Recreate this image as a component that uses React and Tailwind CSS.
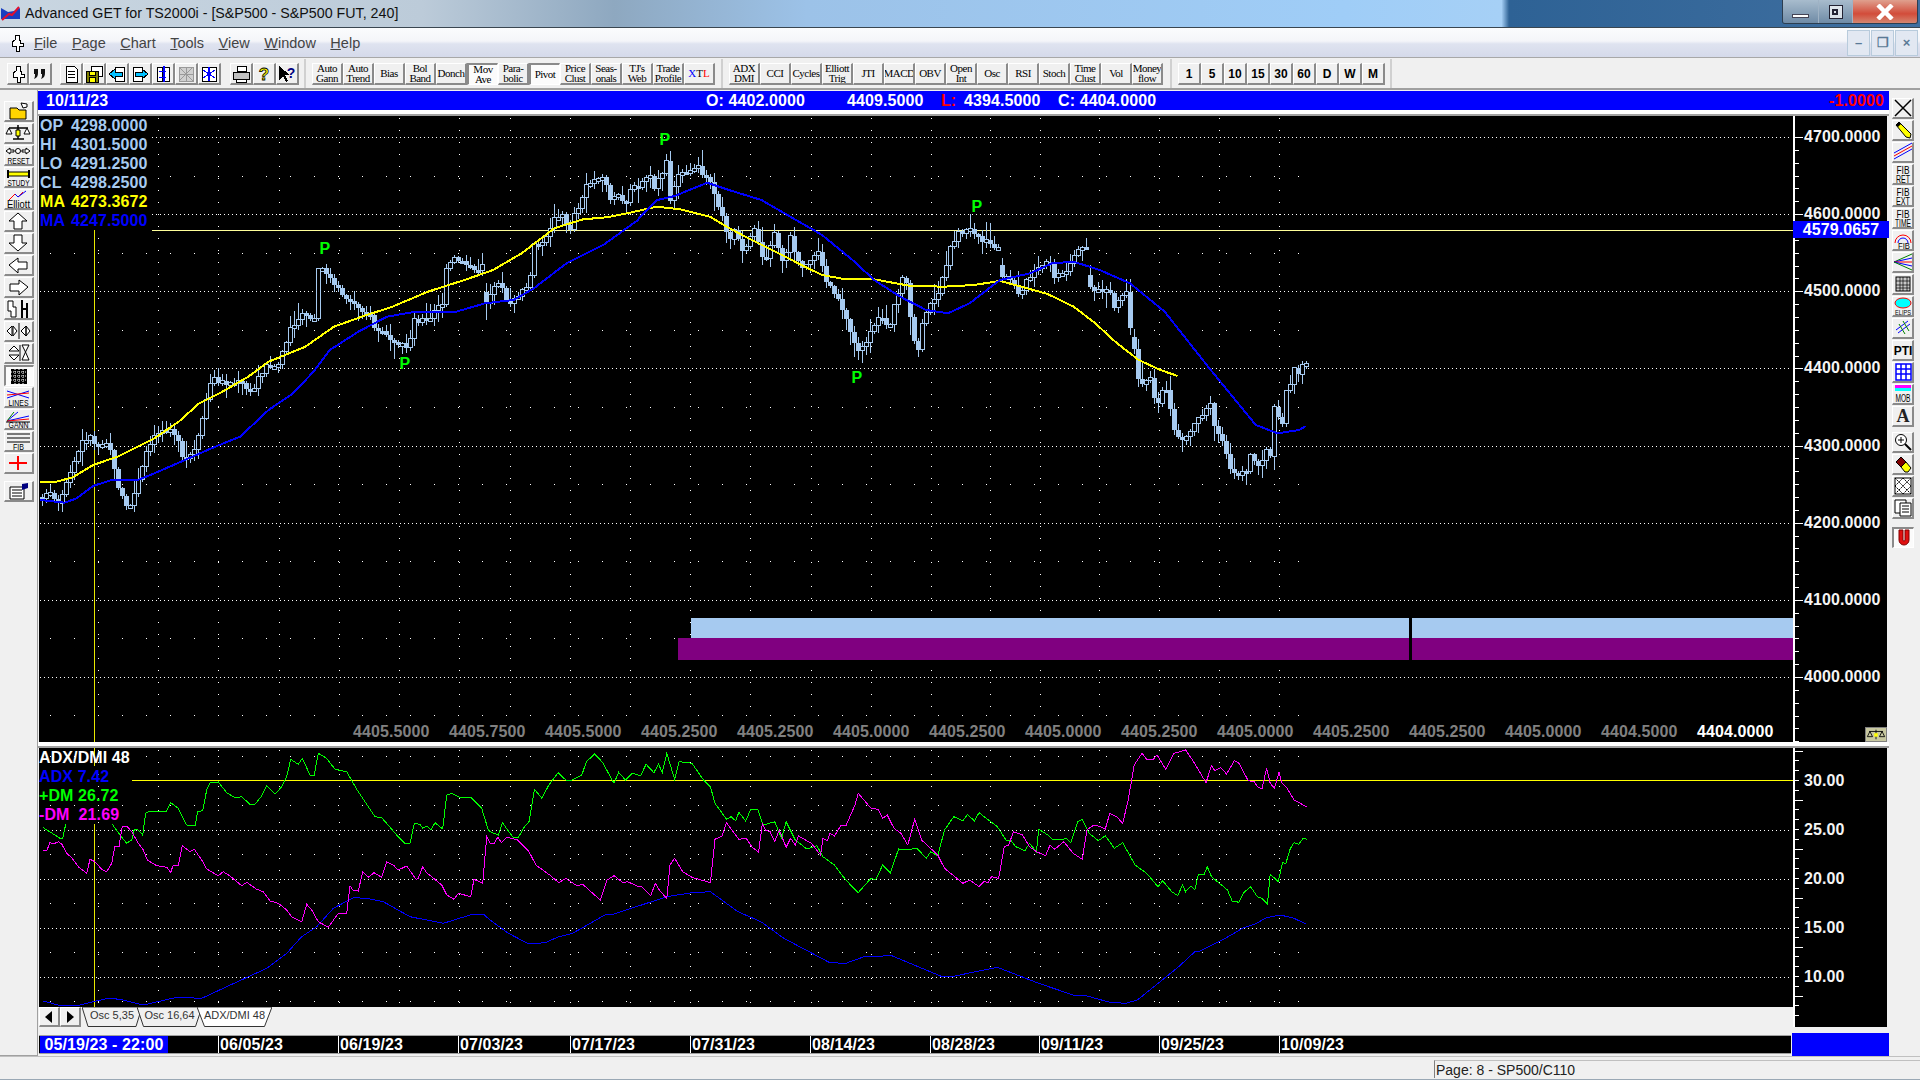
import React from "react";

// zoom-crop coordinates to page coordinates
const z = (ox, oy, sx) => (pts) => pts.map(([x, y]) => [ox + x / sx, oy + y / 3]);
const z6 = z(0, 720, 3);
const z7 = z(40, 220, 2.45);
const z8 = z(640, 120, 2.306);
const z9 = z(1200, 600, 2.178);
const z10 = z(490, 750, 2.178);
const z11 = z(530, 120, 3);
const toPoints = (pts) => pts.map(([x, y]) => `${x.toFixed(1)},${y.toFixed(1)}`).join(" ");

const priceTrace = [
  ...z7([[0,830],[25,825],[45,860],[65,790],[85,720],[105,660],[122,650],[140,680],[160,660],[172,690],[185,780],[200,830],[215,875],[235,805],[260,700],[285,640],[320,620],[335,655],[350,730],[380,690],[395,615],[408,530],[420,475],[450,490],[490,490],[520,520],[535,470],[560,430],[580,445],[600,370],[615,315],[650,280],[670,320],[680,150],[700,155],[720,200],[740,222],[765,250],[790,270],[810,295],[820,330],[850,345],[875,365],[900,385],[915,300],[955,300],[970,265],[985,250],[995,150],[1010,118],[1040,125],[1065,160],[1085,130],[1095,280],[1105,215],[1130,190],[1145,250],[1165,240],[1185,210],[1205,150]]),
  ...z11([[10,380],[35,375],[50,340],[60,320],[72,300],[85,295],[97,290],[110,315],[120,325],[135,275],[155,240],[168,195],[190,175],[215,170],[228,195],[240,245],[265,225],[288,245],[300,205],[325,205],[345,170],[360,175],[372,205],[385,170],[398,170],[408,125],[420,245],[445,155],[470,150],[495,135],[520,160],[535,165]]),
  ...z8([[172,220],[190,300],[205,355],[220,330],[240,400],[265,325],[285,430],[310,340],[330,440],[345,350],[360,430],[385,440],[410,390],[425,475],[455,530],[470,580],[485,640],[500,690],[520,680],[540,605],[560,590],[575,630],[590,530],[610,460],[625,620],[640,700],[655,580],[680,540],[700,465],[710,400],[730,340],[760,330],[790,360],[830,395],[835,480],[850,470],[870,520],[895,480],[915,450],[945,425],[950,475],[985,460],[1000,410],[1030,372],[1030,490],[1050,515],[1085,510],[1085,585],[1105,535],[1120,515],[1130,635],[1140,700],[1145,770],[1160,805],[1175,760],[1190,860],[1210,795],[1225,890],[1235,945],[1255,960],[1275,915],[1290,890],[1315,845],[1320,920],[1345,970],[1360,1050],[1395,1065],[1410,980],[1420,1055],[1445,985],[1455,1010],[1460,850],[1480,930],[1482,810],[1500,800],[1502,745],[1520,760],[1530,735],[1542,732]]),
];

const maYellow = [
  ...z7([[0,785],[40,785],[80,772],[130,735],[190,710],[280,655],[340,605],[390,550],[440,520],[510,470],[560,425],[650,380],[720,320],[800,285],[860,262],[950,215],[1040,180],[1110,150],[1180,100],[1260,25]]),
  ...z11([[120,310],[160,298],[230,292],[300,278],[380,260],[450,268],[540,290]]),
  ...z8([[200,320],[250,355],[320,400],[380,440],[420,465],[470,477],[540,478],[620,497],[700,500],[770,495],[830,483],[880,500],[940,522],[1000,560],[1050,610],[1100,670],[1150,720],[1200,750],[1240,768]]),
];

const maBlue = [
  ...z7([[0,840],[60,848],[90,835],[130,798],[175,780],[240,780],[280,760],[340,728],[420,685],[490,650],[560,570],[620,520],[670,455],[710,390],[780,335],[850,290],[920,275],[1020,275],[1090,250],[1160,240],[1210,205],[1290,130],[1380,75],[1465,0]]),
  ...z8([[0,290],[40,240],[80,228],[155,188],[210,212],[280,240],[340,285],[420,345],[490,420],[540,480],[600,530],[660,570],[710,580],[760,550],[830,480],[900,460],[950,430],[1000,425],[1060,450],[1130,490],[1210,575],[1310,740],[1420,915],[1470,940],[1520,930],[1535,918]]),
];

const dmPlusA = z6([[128,322],[180,355],[188,355],[197,313]]);
const dmPlusB = [
  ...z6([[337,313],[360,345],[380,370],[395,360],[403,328],[415,330],[428,345],[437,280],[445,275],[500,273],[512,248],[535,265],[560,315],[585,318],[593,275],[608,272],[620,210],[630,188],[655,186],[680,218],[705,233],[725,230],[750,253],[765,253],[785,228],[800,197],[825,223],[845,200],[860,170],[872,118],[895,133],[907,115],[930,165],[942,168],[955,100],[980,115],[1005,148],[1040,155],[1070,208],[1125,290],[1145,293],[1190,345],[1215,370],[1230,370],[1243,310],[1260,313],[1268,325],[1280,318],[1292,330],[1305,308],[1328,327],[1340,225],[1355,220],[1380,232],[1412,232],[1445,265],[1465,330]]),
  ...z10([[0,245],[18,255],[27,218],[50,262],[62,262],[75,230],[85,215],[97,118],[113,145],[128,105],[148,68],[165,90],[178,90],[200,75],[210,35],[228,12],[245,37],[270,100],[280,67],[295,90],[310,70],[328,77],[340,43],[357,68],[367,42],[375,68],[385,10],[402,88],[412,35],[440,40],[465,90],[480,110],[490,160],[515,208],[525,200],[535,212],[542,187],[557,213],[568,178],[583,178],[595,225],[620,215],[635,265],[645,215],[665,270],[690,297],[712,287],[725,320],[750,345],[775,390],[802,428],[820,400],[830,385],[840,390],[855,345],[872,368],[890,297],[905,300],[930,295],[950,325],[960,305],[975,318],[990,240],[1010,200],[1030,212],[1040,193],[1055,213],[1065,188],[1105,230],[1125,272],[1135,272],[1145,290],[1165,302],[1175,280],[1190,305],[1195,238],[1215,255],[1225,268],[1245,270],[1255,265],[1265,278],[1280,215],[1290,208],[1305,250],[1325,272],[1340,257],[1360,295],[1378,278],[1405,345],[1430,370],[1455,410],[1465,392],[1485,425],[1498,437],[1508,405],[1515,425],[1527,408],[1535,420],[1543,373],[1555,375],[1562,350]]),
  ...z9([[25,830],[60,870],[70,903],[85,907],[95,878],[110,860],[125,890],[135,895],[147,912],[153,822],[170,845],[180,788],[187,790],[197,745],[205,728],[215,733],[225,715],[233,718]]),
];

const dmMinus = [
  ...z6([[130,390],[140,393],[150,367],[160,372],[175,365],[185,372],[200,400],[215,413],[235,440],[260,460],[270,418],[285,425],[305,448],[320,455],[335,430],[345,378],[357,380],[367,318],[380,318],[395,335],[415,370],[430,390],[442,420],[470,437],[500,442],[512,457],[520,435],[535,437],[547,377],[570,395],[583,388],[605,420],[620,447],[655,467],[670,455],[690,468],[725,497],[740,487],[770,508],[790,515],[810,543],[835,550],[860,570],[875,590],[905,605],[920,553],[935,570],[955,605],[985,622],[1015,580],[1040,580],[1050,497],[1060,512],[1075,513],[1088,455],[1105,472],[1122,458],[1145,472],[1160,425],[1180,435],[1195,450],[1220,438],[1248,478],[1255,475],[1268,440],[1280,458],[1325,495],[1340,525],[1362,538],[1375,520],[1412,530],[1422,478],[1448,490],[1460,350]]),
  ...z10([[0,280],[8,282],[17,262],[25,278],[37,262],[60,270],[85,305],[100,345],[130,375],[150,398],[165,385],[190,408],[202,403],[240,450],[255,390],[270,377],[290,398],[300,395],[320,408],[330,410],[350,437],[360,400],[370,423],[385,445],[392,345],[402,325],[420,365],[440,382],[480,398],[490,268],[505,258],[515,218],[542,268],[558,265],[570,290],[585,307],[593,222],[600,240],[610,245],[620,275],[630,240],[645,292],[655,265],[665,285],[672,258],[700,280],[720,315],[725,265],[735,272],[740,250],[750,258],[765,225],[775,228],[795,165],[802,130],[830,175],[845,178],[855,205],[865,195],[880,235],[895,250],[910,285],[925,208],[940,270],[975,315],[990,355],[1030,400],[1045,390],[1065,410],[1075,395],[1085,397],[1092,380],[1108,385],[1120,290],[1130,285],[1140,245],[1160,255],[1175,290],[1190,305],[1210,317],[1220,285],[1230,298],[1250,275],[1270,310],[1290,328],[1300,240],[1315,225],[1330,230],[1340,238],[1350,190],[1365,200],[1378,220],[1390,150],[1403,45],[1420,10],[1430,28],[1443,30],[1453,15],[1472,58],[1490,10],[1515,0],[1530,30]]),
  ...z9([[13,548],[25,497],[32,512],[45,503],[58,522],[75,482],[85,490],[105,542],[118,545],[125,560],[135,567],[145,505],[153,550],[162,565],[172,517],[178,548],[190,565],[205,600],[232,620]]),
];

const adx = [
  ...z6([[130,843],[185,858],[240,855],[280,845],[325,835],[360,838],[430,855],[530,832],[605,835],[680,800],[800,745],[860,700],[905,650],[950,620],[1000,565],[1060,533],[1100,535],[1150,545],[1230,590],[1330,610],[1420,582],[1450,582]]),
  ...z10([[0,510],[40,550],[85,582],[120,578],[150,560],[180,550],[250,495],[270,492],[385,440],[440,428],[480,425],[540,485],[590,515],[640,565],[740,638],[775,640],[815,620],[875,617],[985,680],[1005,680],[1105,652],[1195,700],[1270,735],[1300,738],[1350,757],[1385,760],[1410,750],[1500,650],[1535,605]]),
  ...z9([[0,1053],[55,1015],[95,983],[120,972],[145,953],[175,945],[205,955],[232,973]]),
];

const dateGrid = [98,158,218,279,339,399,459,510,570,630,690,750,811,871,931,990,1040,1099,1159,1219,1279];
// bars that open away from the previous close
const gapBars = [486, 714, 1002, 1133, 1087];

function closeAt(x) {
  for (let i = 1; i < priceTrace.length; i++) {
    const [x0, y0] = priceTrace[i - 1];
    const [x1, y1] = priceTrace[i];
    if (x <= x1) return y0 + ((y1 - y0) * (x - x0)) / Math.max(x1 - x0, 0.01);
  }
  return priceTrace[priceTrace.length - 1][1];
}

// candles follow the traced price, wicks come from a small seeded generator
function buildCandles() {
  let seed = 17;
  const rnd = () => {
    seed = (seed * 9301 + 49297) % 233280;
    return seed / 233280;
  };
  const out = [];
  let prev = closeAt(40);
  for (let x = 42; x <= 1308; x += 4) {
    const close = closeAt(x) + (rnd() - 0.5) * 6;
    if (gapBars.some((g) => x >= g && x < g + 4)) prev = close - 12;
    const top = Math.min(prev, close);
    const bottom = Math.max(prev, close);
    out.push({
      x,
      top,
      height: Math.max(bottom - top, 3),
      high: top - 1 - rnd() * rnd() * 18,
      low: bottom + 2 + rnd() * rnd() * 16,
      down: close > prev,
    });
    prev = close;
  }
  return out;
}
const candles = buildCandles();

const priceLabels = [4700, 4600, 4500, 4400, 4300, 4200, 4100, 4000];
const oscLabels = ["30.00", "25.00", "20.00", "15.00", "10.00"];
const lastValues = ["4405.5000","4405.7500","4405.5000","4405.2500","4405.2500","4405.0000","4405.2500","4405.0000","4405.2500","4405.0000","4405.2500","4405.2500","4405.0000","4404.5000"];
const dateTicks = [
  ["06/05/23", 120], ["06/19/23", 120], ["07/03/23", 112], ["07/17/23", 120], ["07/31/23", 120],
  ["08/14/23", 120], ["08/28/23", 109], ["09/11/23", 120], ["09/25/23", 120], ["10/09/23", 510],
];

const raised = "bg-[#f0f0f0] border-t border-l border-r-2 border-b-2 border-t-white border-l-white border-r-[#8a8a8a] border-b-[#8a8a8a]";
const sunken = "bg-[#fbfbfb] border-t-2 border-l-2 border-r border-b border-t-[#8a8a8a] border-l-[#8a8a8a] border-r-white border-b-white";

function Button({ w, pressed, children }) {
  return (
    <div className={`${pressed ? sunken : raised} flex h-[22px] shrink-0 items-center justify-center overflow-hidden ${w}`}>
      {children}
    </div>
  );
}

function TextBtn({ lines, pressed }) {
  return (
    <Button w="w-[31px]" pressed={pressed}>
      <span className="text-center font-['Liberation_Serif',serif] text-[11px] leading-[9.5px] tracking-[-0.5px] text-black">
        {lines.map((l) => (
          <div key={l}>{l}</div>
        ))}
      </span>
    </Button>
  );
}

const Ico = ({ children, w = 18, h = 18 }) => (
  <svg width={w} height={h} viewBox={`0 0 ${w} ${h}`} shapeRendering="crispEdges">
    {children}
  </svg>
);

const PinIcon = () => (
  <Ico>
    <path d="M7 1h4v5h1v3h3v3h-4v5H8v-5H4V8l3-2z" fill="#fff" stroke="#000" />
  </Ico>
);

const QuoteIcon = () => (
  <svg width="18" height="18" viewBox="0 0 18 18">
    <path d="M3 4h4v4c0 3-1 5-4 6 1-2 1-3 1-5H3zM10 4h4v4c0 3-1 5-4 6 1-2 1-3 1-5h-1z" fill="#111" />
  </svg>
);

const pageIcons = [
  <Ico key="new"><path d="M4 1h8l3 3v13H4z" fill="#fff" stroke="#000" /><path d="M6 6h7M6 9h7M6 12h7" stroke="#000" /></Ico>,
  <Ico key="save"><path d="M6 1h11v10H6z" fill="#fff" stroke="#000" /><path d="M1 6h12v11H1z" fill="#808000" stroke="#000" /><path d="M4 6h6v4H4zM4 12h6v5H4z" fill="#ffff00" stroke="#000" /></Ico>,
  <Ico key="back"><path d="M7 2h9v14H7z" fill="#fff" stroke="#000" /><path d="M1 9l6-5v3h7v4H7v3z" fill="#00c0ff" stroke="#000" /></Ico>,
  <Ico key="next"><path d="M2 2h9v14H2z" fill="#fff" stroke="#000" /><path d="M17 9l-6-5v3H4v4h7v3z" fill="#00c0ff" stroke="#000" /></Ico>,
  <Ico key="tile"><path d="M3 2h5v14H3zM10 2h5v14h-5z" fill="#fff" stroke="#000" /><path d="M9 1h2v16H9z" fill="#0000ff" /><path d="M5 6h7M5 12h7" stroke="#0000ff" /></Ico>,
  <Ico key="off"><path d="M2 2h14v14H2z" fill="#d0d0d0" stroke="#9a9a9a" /><path d="M2 2l14 14M16 2L2 16M9 2v14M2 9h14" stroke="#9a9a9a" /></Ico>,
  <Ico key="link"><path d="M2 2h14v14H2z" fill="#fff" stroke="#000" /><path d="M3 5l12 8M15 5L3 13" stroke="#0000ff" /><path d="M9 2v14" stroke="#0000ff" strokeWidth="2" /></Ico>,
];

const printIcons = [
  <Ico key="print"><path d="M5 1h9v5H5z" fill="#fff" stroke="#000" /><path d="M1 7h16v7H1z" fill="#c0c0c0" stroke="#000" /><path d="M4 14h10v3H4z" fill="#fff" stroke="#000" /></Ico>,
  <Ico key="help"><text x="9" y="15" textAnchor="middle" fontFamily="Liberation Sans" fontWeight="700" fontSize="17" fill="#ffff00" stroke="#000" strokeWidth="0.8">?</text></Ico>,
  <Ico key="what"><path d="M1 1v14l4-4 3 6 2-1-3-6h5z" fill="#000" /><text x="13" y="13" textAnchor="middle" fontFamily="Liberation Sans" fontWeight="700" fontSize="14" fill="#000080">?</text></Ico>,
];

const t = { fontFamily: "Liberation Sans", fill: "#000" };
// squeezed labels, the originals are narrow bitmap letters
const Lbl = ({ x = 13.5, y = 19, len, size = 9.5, children }) => (
  <text x={x} y={y} textAnchor="middle" textLength={len} lengthAdjust="spacingAndGlyphs" style={{ ...t, fontSize: size }}>
    {children}
  </text>
);
const Arrow = ({ pts }) => <polygon points={pts} fill="#fff" stroke="#000" />;

const leftTools = [
  <g key="a"><path d="M5 7h7l2 2h7v9H5z" fill="#ffd400" stroke="#000" /><path d="M16 2l6 1v3l-4 1z" fill="#fff" stroke="#000" /></g>,
  <g key="b"><path d="M13 2v14M4 5h19M8 16h11" stroke="#000" strokeWidth="1.5" /><path d="M4 5L1 11h6zM22 5l-3 6h6z" fill="#fff" stroke="#000" /><path d="M11 7h4v6h-4z" fill="#ffff00" stroke="#000" /></g>,
  <g key="c"><path d="M1 6l4-3v2h4v2H5v2zM25 6l-4-3v2h-4v2h4v2z" fill="#fff" stroke="#000" /><circle cx="13" cy="6" r="2.5" fill="#fff" stroke="#000" /><Lbl len={22}>RESET</Lbl></g>,
  <g key="d"><path d="M3 5h21v4H3z" fill="#ffff00" stroke="#000" /><path d="M3 3v8M24 3v8" stroke="#000" strokeWidth="2" /><Lbl len={22}>STUDY</Lbl></g>,
  <g key="e"><path d="M4 11l6-6 3 3 5-5" stroke="#ff0000" fill="none" /><path d="M10 5l3 3 8-6" stroke="#0000ff" fill="none" /><Lbl len={23} size={10}>Elliott</Lbl></g>,
  <Arrow key="f" pts="13,2 22,10 17,10 17,18 9,18 9,10 4,10" />,
  <Arrow key="g" pts="13,18 22,10 17,10 17,2 9,2 9,10 4,10" />,
  <Arrow key="h" pts="4,10 13,3 13,7 22,7 22,14 13,14 13,18" />,
  <Arrow key="i" pts="23,10 14,3 14,7 5,7 5,14 14,14 14,18" />,
  <g key="j"><path d="M3 2h5v6h3v10H6v-6H3z" fill="#fff" stroke="#000" /><path d="M17 1v18M22 4v15M17 10h5" stroke="#000" strokeWidth="2" /></g>,
  <g key="k"><path d="M2 10l5-5v10zM12 10L8 5v10zM16 10l5-5v10zM25 10l-4-5v10z" fill="#fff" stroke="#000" /><path d="M14 2v16" stroke="#000" /></g>,
  <g key="l"><path d="M4 8l5-5 5 5zM4 12l5 5 5-5z" fill="#fff" stroke="#000" /><path d="M17 2h7l-3.5 7 3.5 8h-7l3.5-8z" fill="#fff" stroke="#000" /><path d="M15 2v16" stroke="#000" /></g>,
  <g key="m"><rect x="5" y="3" width="16" height="15" fill="#000" /><path d="M5 6h16M5 10h16M5 14h16M9 3v15M13 3v15M17 3v15" stroke="#fff" strokeDasharray="1 1" /></g>,
  <g key="n"><path d="M2 4l22 7M2 11L24 4" stroke="#0000ff" /><path d="M2 8l22-2" stroke="#ff0000" /><Lbl len={20}>LINES</Lbl></g>,
  <g key="o"><path d="M2 12L13 3M2 12L24 7" stroke="#0000ff" /><path d="M2 12L9 3" stroke="#008000" /><path d="M2 12L24 10" stroke="#ff0000" /><path d="M1 13h24" stroke="#000" /><Lbl len={20}>GANN</Lbl></g>,
  <g key="p"><path d="M2 3h23M2 7h23M2 11h23" stroke="#000" /><Lbl len={11}>FIB</Lbl></g>,
  <path key="q" d="M13 3v14M4 10h18" stroke="#ff0000" strokeWidth="2" />,
];

const FibLabel = ({ a, b, lb = 14 }) => (
  <g>
    <Lbl x={10} y={9.5} len={13} size={10}>{a}</Lbl>
    <Lbl x={10} y={18.5} len={lb} size={10}>{b}</Lbl>
  </g>
);

const rightTools = [
  <path key="a" d="M2 2l16 16M18 2L2 18" stroke="#000" strokeWidth="1.5" />,
  <g key="b"><path d="M3 5l3-3 12 12-1 4-4-1z" fill="#ffff00" stroke="#000" /><path d="M3 5l3-3 2 2-3 3z" fill="#000" /></g>,
  <g key="c"><path d="M1 14L19 4" stroke="#ff0000" /><path d="M1 17L19 7" stroke="#0000ff" /><path d="M1 11L19 1" stroke="#0000ff" /></g>,
  <FibLabel key="d" a="FIB" b="RET" />,
  <FibLabel key="e" a="FIB" b="EXT" />,
  <FibLabel key="f" a="FIB" b="TIME" lb={16} />,
  <g key="g"><path d="M2 13a8 8 0 0116 0" fill="none" stroke="#ff0000" /><path d="M5 13a5 5 0 0110 0" fill="none" stroke="#0000ff" /><Lbl x={11} y={18.5} len={12} size={9.5}>FIB</Lbl></g>,
  <g key="h"><path d="M1 10L19 2" stroke="#008000" /><path d="M1 10l18-4" stroke="#0000ff" /><path d="M1 10h18" stroke="#ff0000" /><path d="M1 10l18 4" stroke="#0000ff" /><path d="M1 10l18 8" stroke="#008000" /></g>,
  <g key="i"><rect x="3" y="3" width="14" height="14" fill="#c8c8c8" stroke="#000" /><path d="M3 7h14M3 11h14M3 14h14M7 3v14M10 3v14M14 3v14" stroke="#000" strokeWidth="0.7" /></g>,
  <g key="j"><ellipse cx="10" cy="7" rx="8" ry="5" fill="#00ffff" stroke="#ff0000" /><Lbl x={10} y={18.5} len={16} size={7.5}>ELIPS</Lbl></g>,
  <g key="k"><path d="M3 12L15 3M5 15L17 6" stroke="#0000ff" /><path d="M6 6l6 10M10 3l6 10" stroke="#008000" /></g>,
  <text key="l" x="10" y="15" textAnchor="middle" style={{ ...t, fontSize: 12, fontWeight: 700 }}>PTI</text>,
  <g key="m"><rect x="3" y="2" width="15" height="16" fill="#fff" stroke="#0000ff" strokeWidth="1.5" /><path d="M3 7h15M3 12h15M8 2v16M13 2v16" stroke="#0000ff" strokeWidth="1.5" /></g>,
  <g key="n"><rect x="2" y="1" width="16" height="3" fill="#ff00ff" /><rect x="2" y="4" width="16" height="3" fill="#00ffff" /><Lbl x={10} y={17.5} len={15} size={10}>MOB</Lbl></g>,
  <text key="o" x="10" y="16" textAnchor="middle" fontFamily="Liberation Serif" fontWeight="700" fontSize="18" fill="#222">A</text>,
];

const rightTools2 = [
  <g key="p"><circle cx="8" cy="8" r="5.5" fill="#fff" stroke="#000" /><path d="M12 12l6 6" stroke="#000" strokeWidth="2" /><path d="M5 8h6M8 5v6" stroke="#000" /></g>,
  <g key="q"><path d="M3 8l5-5 5 5-5 5z" fill="#800000" stroke="#000" /><path d="M8 13l5-5 5 6-3 4h-3z" fill="#ffff00" stroke="#000" /></g>,
  <g key="r"><rect x="2" y="2" width="16" height="16" fill="#fff" stroke="#000" /><path d="M2 2l16 16M18 2L2 18M2 10L10 2M10 18l8-8M10 2l8 8M2 10l8 8" stroke="#000" strokeDasharray="2 1" /></g>,
  <g key="s"><path d="M2 2h11v13H2z" fill="#fff" stroke="#000" /><path d="M7 5h11v13H7z" fill="#fff" stroke="#000" /><path d="M9 8h7M9 11h7M9 14h7" stroke="#000" /></g>,
];

function LeftBtn({ pressed, children }) {
  return (
    <div className={`${pressed ? sunken : raised} h-[21px] w-[30px] shrink-0`}>
      <svg width="27" height="20" viewBox="0 0 27 20" className="-mt-[1px] block">
        {children}
      </svg>
    </div>
  );
}

function RightBtn({ pressed, children }) {
  return (
    <div className={`${pressed ? sunken : raised} h-[21px] w-[22px] shrink-0`}>
      <svg width="20" height="20" viewBox="0 0 20 20" className="-mt-[1px] block">
        {children}
      </svg>
    </div>
  );
}

function Tab({ label, w, active }) {
  return (
    <div className={`relative -ml-[5px] h-[20px] shrink-0 ${w}`}>
      <svg className="absolute inset-0 h-full w-full" viewBox="0 0 100 20" preserveAspectRatio="none">
        <polygon points="0,0 100,0 90,19.5 10,19.5" fill={active ? "#fff" : "#f0f0f0"} stroke="#333" strokeWidth="1" vectorEffect="non-scaling-stroke" />
      </svg>
      <div className="relative text-center text-[11px] leading-[16px] text-[#333]">{label}</div>
    </div>
  );
}

function PriceChart() {
  return (
    <svg className="block h-[626px] w-[1754px]" viewBox="39 116 1754 626">
      {priceLabels.map((p, i) => (
        <line key={p} x1="40" x2="1790" y1={137.5 + i * 77.14} y2={137.5 + i * 77.14} stroke="#fff" strokeDasharray="1 3" shapeRendering="crispEdges" />
      ))}
      {priceLabels.map((p, i) => (
        <line key={p} x1="50" x2="1306" y1={176 + i * 77.14} y2={176 + i * 77.14} stroke="#fff" strokeDasharray="1 23" shapeRendering="crispEdges" />
      ))}
      {dateGrid.map((x) => (
        <line key={x} x1={x + 0.5} x2={x + 0.5} y1="118" y2="716" stroke="#fff" strokeDasharray="1 11" shapeRendering="crispEdges" />
      ))}
      <line x1="152" x2="1793" y1="230.5" y2="230.5" stroke="#ffff9a" shapeRendering="crispEdges" />
      <line x1="94.5" x2="94.5" y1="230" y2="742" stroke="#e8e800" shapeRendering="crispEdges" />
      <rect x="691" y="618" width="1102" height="20" fill="#a6caf0" />
      <rect x="678" y="638" width="1115" height="22" fill="#800080" />
      <rect x="1409" y="618" width="3" height="42" fill="#000" />
      <g shapeRendering="crispEdges">
        {candles.map((c) => (
          <g key={c.x}>
            <line x1={c.x + 0.5} x2={c.x + 0.5} y1={c.high} y2={c.low} stroke="#a6caf0" />
            {c.down ? (
              <rect x={c.x - 2} y={c.top} width="5" height={c.height} fill="#a6caf0" />
            ) : (
              <rect x={c.x - 1.5} y={c.top} width="4" height={c.height} fill="#000" stroke="#a6caf0" />
            )}
          </g>
        ))}
      </g>
      <polyline points={toPoints(maYellow)} fill="none" stroke="#ffff00" strokeWidth="2" shapeRendering="crispEdges" />
      <polyline points={toPoints(maBlue)} fill="none" stroke="#0000ff" strokeWidth="2" shapeRendering="crispEdges" />
      <g fontFamily="Liberation Sans" fontWeight="700" fontSize="16" fill="#00ff00" textAnchor="middle">
        <text x="325" y="254">P</text>
        <text x="405" y="369">P</text>
        <text x="665" y="145">P</text>
        <text x="977" y="212">P</text>
        <text x="857" y="383">P</text>
      </g>
    </svg>
  );
}

function OscChart() {
  const levels = [830, 879, 928, 977];
  const half = [756, 805, 854, 903, 952, 1001];
  return (
    <svg className="block h-[259px] w-[1754px]" viewBox="39 748 1754 259">
      {levels.map((y) => (
        <line key={y} x1="40" x2="1790" y1={y + 0.5} y2={y + 0.5} stroke="#fff" strokeDasharray="1 3" shapeRendering="crispEdges" />
      ))}
      {half.map((y) => (
        <line key={y} x1="50" x2="1306" y1={y + 0.5} y2={y + 0.5} stroke="#fff" strokeDasharray="1 23" shapeRendering="crispEdges" />
      ))}
      {dateGrid.map((x) => (
        <line key={x} x1={x + 0.5} x2={x + 0.5} y1="750" y2="1007" stroke="#fff" strokeDasharray="1 11" shapeRendering="crispEdges" />
      ))}
      <line x1="132" x2="1793" y1="780.5" y2="780.5" stroke="#ffff00" shapeRendering="crispEdges" />
      <line x1="94.5" x2="94.5" y1="748" y2="766" stroke="#e8e800" shapeRendering="crispEdges" />
      <line x1="94.5" x2="94.5" y1="824" y2="1007" stroke="#e8e800" shapeRendering="crispEdges" />
      <g fill="none" strokeWidth="1" shapeRendering="crispEdges">
        <polyline points={toPoints(adx)} stroke="#0000ff" />
        <polyline points={toPoints(dmPlusA)} stroke="#00ff00" />
        <polyline points={toPoints(dmPlusB)} stroke="#00ff00" />
        <polyline points={toPoints(dmMinus)} stroke="#ff00ff" />
      </g>
    </svg>
  );
}

function AxisTicks({ start, step, count, major }) {
  const ticks = [];
  for (let i = 0; i < count; i++) ticks.push(start + i * step);
  return (
    <svg className="absolute inset-0 h-full w-full" shapeRendering="crispEdges">
      <rect x="0" y="0" width="2" height="100%" fill="#fff" />
      {ticks.map((y, i) => (
        <line key={i} x1="2" x2={i % major === 0 ? 10 : 6} y1={y} y2={y} stroke="#fff" />
      ))}
    </svg>
  );
}

export default function App() {
  return (
    <div className="flex h-[1080px] w-[1920px] flex-col overflow-hidden bg-[#f0f0f0] font-['Liberation_Sans',sans-serif]">
      {/* title bar */}
      <div className="relative flex h-[28px] shrink-0 items-center border-b border-b-[#3a4650] bg-[linear-gradient(90deg,#c9d6e1_0%,#bccbd9_22%,#8ea8c0_32%,#9cc2e8_42%,#9fcdf7_70%,#a6d0f6_78.2%,#2e6295_78.6%,#3f6fa0_100%)]">
        <svg width="20" height="16" viewBox="0 0 20 16" className="ml-[1px] mr-[4px] shrink-0">
          <path d="M0 2l7 4 6-1 6-3v11H0z" fill="#1a3fc0" />
          <path d="M1 14L8 8l3 1 7-8" fill="none" stroke="#e01030" strokeWidth="2" />
        </svg>
        <span className="whitespace-nowrap text-[14.25px] text-[#111]">Advanced GET for TS2000i - [S&amp;P500 - S&amp;P500 FUT, 240]</span>
        <div className="absolute right-[2px] top-0 flex h-[24px] overflow-hidden rounded-b-[3px] border border-t-0 border-[#2c3e50]">
          <div className="flex w-[35px] items-end justify-center bg-[linear-gradient(#a8bccd,#6f8ba6)] pb-[5px]">
            <div className="h-[4px] w-[17px] border border-[#445] bg-white" />
          </div>
          <div className="flex w-[35px] items-center justify-center border-x border-[#9fb2c4] bg-[linear-gradient(#a8bccd,#6f8ba6)]">
            <div className="relative h-[14px] w-[14px] border border-[#223] bg-white/70">
              <div className="absolute left-[2px] top-[3px] h-[6px] w-[6px] border-2 border-[#223]" />
            </div>
          </div>
          <div className="flex w-[64px] items-center justify-center bg-[linear-gradient(#dfa08e,#d24c3a_60%,#d58670)]">
            <svg width="20" height="16" viewBox="0 0 20 16">
              <path d="M3 1l14 14M17 1L3 15" stroke="#fff" strokeWidth="4.5" />
            </svg>
          </div>
        </div>
      </div>

      {/* menu */}
      <div className="relative flex h-[30px] shrink-0 items-center border-b border-b-[#a8a8a8] bg-[linear-gradient(#fbfcfd,#f4f5f9_45%,#dfe3f0_55%,#d5daea)] text-[14.5px] text-[#444]">
        <div className="ml-[8px] mr-[8px]"><PinIcon /></div>
        <div className="flex gap-[14.5px] pt-[2px]">
          {["File", "Page", "Chart", "Tools", "View", "Window", "Help"].map((m) => (
            <span key={m}>
              <span className="underline">{m[0]}</span>
              {m.slice(1)}
            </span>
          ))}
        </div>
        <div className="absolute right-[2px] top-[2px] flex gap-[1px]">
          {["–", "❐", "×"].map((g) => (
            <div key={g} className="flex h-[26px] w-[23px] items-center justify-center border border-[#b8cbdc] bg-[#e2e8f2] text-[13px] font-bold text-[#5a7a96]">
              {g}
            </div>
          ))}
        </div>
      </div>

      {/* toolbar */}
      <div className="flex h-[32px] shrink-0 items-start border-b-2 border-b-[#a0a0a0] pt-[5px]">
        <div className="ml-[7px] flex">
          <Button w="w-[22px]"><PinIcon /></Button>
          <Button w="w-[23px]"><QuoteIcon /></Button>
        </div>
        <div className="ml-[8px] flex">
          {pageIcons.map((icon) => (
            <Button key={icon.key} w="w-[23px]">{icon}</Button>
          ))}
        </div>
        <div className="ml-[9px] flex">
          {printIcons.map((icon) => (
            <Button key={icon.key} w="w-[23px]">{icon}</Button>
          ))}
        </div>
        <div className="ml-[5px] mr-[6px] -mt-[4px] h-[29px] w-[2px] shrink-0 bg-[#d0d0d0]" />
        <div className="flex">
          <TextBtn lines={["Auto", "Gann"]} />
          <TextBtn lines={["Auto", "Trend"]} />
          <TextBtn lines={["Bias"]} />
          <TextBtn lines={["Bol", "Band"]} />
          <TextBtn lines={["Donch"]} />
          <TextBtn lines={["Mov", "Ave"]} pressed />
          <TextBtn lines={["Para-", "bolic"]} />
          <TextBtn lines={["Pivot"]} pressed />
          <TextBtn lines={["Price", "Clust"]} />
          <TextBtn lines={["Seas-", "onals"]} />
          <TextBtn lines={["TJ's", "Web"]} />
          <TextBtn lines={["Trade", "Profile"]} />
          <Button w="w-[31px]">
            <span className="font-['Liberation_Serif',serif] text-[11px]">
              <span className="text-[#0000ff]">X</span><span>T</span><span className="text-[#ff0000]">L</span>
            </span>
          </Button>
        </div>
        <div className="ml-[6px] mr-[6px] -mt-[4px] h-[29px] w-[2px] shrink-0 bg-[#d0d0d0]" />
        <div className="flex">
          <TextBtn lines={["ADX", "DMI"]} />
          <TextBtn lines={["CCI"]} />
          <TextBtn lines={["Cycles"]} />
          <TextBtn lines={["Elliott", "Trig"]} />
          <TextBtn lines={["JTI"]} />
          <TextBtn lines={["MACD"]} />
          <TextBtn lines={["OBV"]} />
          <TextBtn lines={["Open", "Int"]} />
          <TextBtn lines={["Osc"]} />
          <TextBtn lines={["RSI"]} />
          <TextBtn lines={["Stoch"]} />
          <TextBtn lines={["Time", "Clust"]} />
          <TextBtn lines={["Vol"]} />
          <TextBtn lines={["Money", "flow"]} />
        </div>
        <div className="ml-[7px] mr-[6px] -mt-[4px] h-[29px] w-[2px] shrink-0 bg-[#d0d0d0]" />
        <div className="flex">
          {["1", "5", "10", "15", "30", "60", "D", "W", "M"].map((n) => (
            <Button key={n} w="w-[23px]">
              <span className="text-[12px] font-bold text-black">{n}</span>
            </Button>
          ))}
        </div>
        <div className="ml-[5px] -mt-[4px] h-[29px] w-[2px] shrink-0 bg-[#d0d0d0]" />
      </div>

      {/* body */}
      <div className="flex h-[966px] shrink-0">
        <div className="flex w-[38px] shrink-0 flex-col items-center gap-[1px] border-b border-r border-b-[#a0a0a0] border-r-[#a0a0a0] pl-[1px] pt-[11px]">
          {leftTools.map((icon) => (
            <LeftBtn key={icon.key} pressed={icon.key === "m"}>{icon}</LeftBtn>
          ))}
          <div className="mt-[6px]">
            <LeftBtn>
              <path d="M5 6h14v12H5z" fill="#fff" stroke="#000" />
              <path d="M7 9h10M7 12h10M7 15h10" stroke="#000" />
              <path d="M17 3l6-1v5l-6 2z" fill="#000080" />
            </LeftBtn>
          </div>
        </div>

        <div className="flex w-[1851px] shrink-0 flex-col tracking-[0.1px]">
          {/* quote bar */}
          <div className="mt-[1px] flex h-[19px] shrink-0 items-center bg-[#0000ff] pl-[8px] text-[16px] font-bold leading-[19px] text-white">
            <span className="w-[660px]">10/11/23</span>
            <span className="w-[141px]">O: 4402.0000</span>
            <span className="w-[94px]">4409.5000</span>
            <span className="w-[23px] text-[#ff0000]">L:</span>
            <span className="w-[94px]">4394.5000</span>
            <span>C: 4404.0000</span>
            <span className="ml-auto pr-[5px] text-[#ff0000]">-1.0000</span>
          </div>
          <div className="h-[6px] shrink-0 border-b-2 border-b-[#a0a0a0] bg-white" />

          {/* price pane */}
          <div className="flex h-[626px] shrink-0">
            <div className="relative ml-[1px] h-[626px] w-[1754px] shrink-0 bg-black">
              <PriceChart />
              <div className="absolute left-[1px] top-0 bg-black pr-[2px] text-[16px] font-bold leading-[19px] text-[#a6caf0]">
                {[["OP", "4298.0000"], ["HI", "4301.5000"], ["LO", "4291.2500"], ["CL", "4298.2500"]].map(([k, v]) => (
                  <div key={k} className="flex"><span className="w-[31px]">{k}</span><span>{v}</span></div>
                ))}
                <div className="flex text-[#ffff00]"><span className="w-[31px]">MA</span><span>4273.3672</span></div>
                <div className="flex text-[#0000ff]"><span className="w-[31px]">MA</span><span>4247.5000</span></div>
              </div>
              <div className="absolute bottom-0 left-[314px] flex text-[16px] font-bold leading-[20px] text-[#808080]">
                {lastValues.map((v, i) => (
                  <span key={i} className="w-[96px]">{v}</span>
                ))}
                <span className="text-white">4404.0000</span>
              </div>
            </div>
            <div className="relative w-[94px] shrink-0 bg-black">
              <AxisTicks start={21.5} step={12.857} count={48} major={6} />
              <div className="relative pl-[11px] pt-[12px] text-[16px] font-bold leading-[18px] text-[#f4f4f4]">
                {priceLabels.map((p) => (
                  <div key={p} className="h-[77.14px]">{p}.0000</div>
                ))}
              </div>
              <div className="absolute left-0 top-[105px] flex h-[17px] w-[96px] items-center justify-center bg-[#0000ff] text-[16px] font-bold text-white">4579.0657</div>
              <div className="absolute bottom-0 right-0 h-[15px] w-[22px] border border-[#808080] bg-[#c8c8a0]">
                <svg viewBox="0 0 22 15" className="block h-full w-full">
                  <path d="M11 2v11M3 4h16M1 10l3-6 3 6zM15 10l3-6 3 6z" fill="none" stroke="#000" />
                  <path d="M9 6h4v4H9z" fill="#ffff00" />
                </svg>
              </div>
            </div>
          </div>
          <div className="h-[6px] shrink-0 border-b-2 border-b-[#a0a0a0] bg-white" />

          {/* oscillator pane */}
          <div className="flex h-[279px] shrink-0">
            <div className="ml-[1px] flex w-[1754px] shrink-0 flex-col">
              <div className="relative h-[259px] bg-black">
                <OscChart />
                <div className="absolute left-0 top-0 text-[16px] font-bold leading-[19px]">
                  <div className="text-white">ADX/DMI 48</div>
                  <div className="text-[#0000ff]">ADX 7.42</div>
                  <div className="text-[#00ff00]">+DM 26.72</div>
                  <div className="text-[#ff00ff]">-DM &nbsp;21.69</div>
                </div>
              </div>
              <div className="flex h-[20px] items-start tracking-normal">
                <div className={`${raised} flex h-[20px] w-[21px] items-center justify-center`}>
                  <svg width="8" height="12" viewBox="0 0 8 12"><path d="M7 0v12L0 6z" fill="#000" /></svg>
                </div>
                <div className={`${raised} flex h-[20px] w-[21px] items-center justify-center`}>
                  <svg width="8" height="12" viewBox="0 0 8 12"><path d="M1 0v12l7-6z" fill="#000" /></svg>
                </div>
                <div className="ml-[6px] flex">
                  <Tab label="Osc 5,35" w="w-[60px]" />
                  <Tab label="Osc 16,64" w="w-[65px]" />
                  <Tab label="ADX/DMI 48" w="w-[75px]" active />
                </div>
              </div>
            </div>
            <div className="relative h-[279px] w-[94px] shrink-0 bg-black">
              <AxisTicks start={3} step={9.8} count={28} major={5} />
              <div className="relative pl-[11px] pt-[24px] text-[16px] font-bold leading-[18px] text-[#f4f4f4]">
                {oscLabels.map((l) => (
                  <div key={l} className="h-[49px]">{l}</div>
                ))}
              </div>
            </div>
          </div>

          {/* date strip */}
          <div className="mt-[6px] flex h-[23px] shrink-0">
            <div className="my-[2px] ml-[1px] flex w-[1752px] shrink-0 items-center border-y border-y-[#a0a0a0] bg-black text-[16px] font-bold leading-[18px] text-white">
              <div className="ml-[1px] flex h-[17px] w-[128px] items-center justify-center bg-[#0000ff]">05/19/23 - 22:00</div>
              <div className="w-[50px]" />
              {dateTicks.map(([d, w]) => (
                <div key={d} className="flex h-[17px] items-center border-l border-l-white pl-[1px]" style={{ width: w }}>{d}</div>
              ))}
            </div>
            <div className="ml-[1px] w-[97px] bg-[#0000ff]" />
          </div>
        </div>

        <div className="flex w-[31px] shrink-0 flex-col items-center gap-[1px] pr-[3px] pt-[8px]">
          {rightTools.map((icon) => (
            <RightBtn key={icon.key}>{icon}</RightBtn>
          ))}
          <div className="h-[3px]" />
          {rightTools2.map((icon) => (
            <RightBtn key={icon.key}>{icon}</RightBtn>
          ))}
          <div className="h-[6px]" />
          <RightBtn pressed>
            <path d="M5 2v10a5 5 0 0010 0V2h-4v10a1 1 0 01-2 0V2z" fill="#e01010" stroke="#800000" />
          </RightBtn>
        </div>
      </div>

      {/* status */}
      <div className="flex h-[24px] shrink-0 items-end justify-end border-t border-b border-t-[#c0c0c0] border-b-[#9aa8b5]">
        <div className="mb-[1px] h-[18px] w-[486px] border-l border-t border-l-[#808080] border-t-[#c0c0c0] pl-[1px] text-[14px] leading-[18px] text-[#222]">Page: 8 - SP500/C110</div>
      </div>
    </div>
  );
}
